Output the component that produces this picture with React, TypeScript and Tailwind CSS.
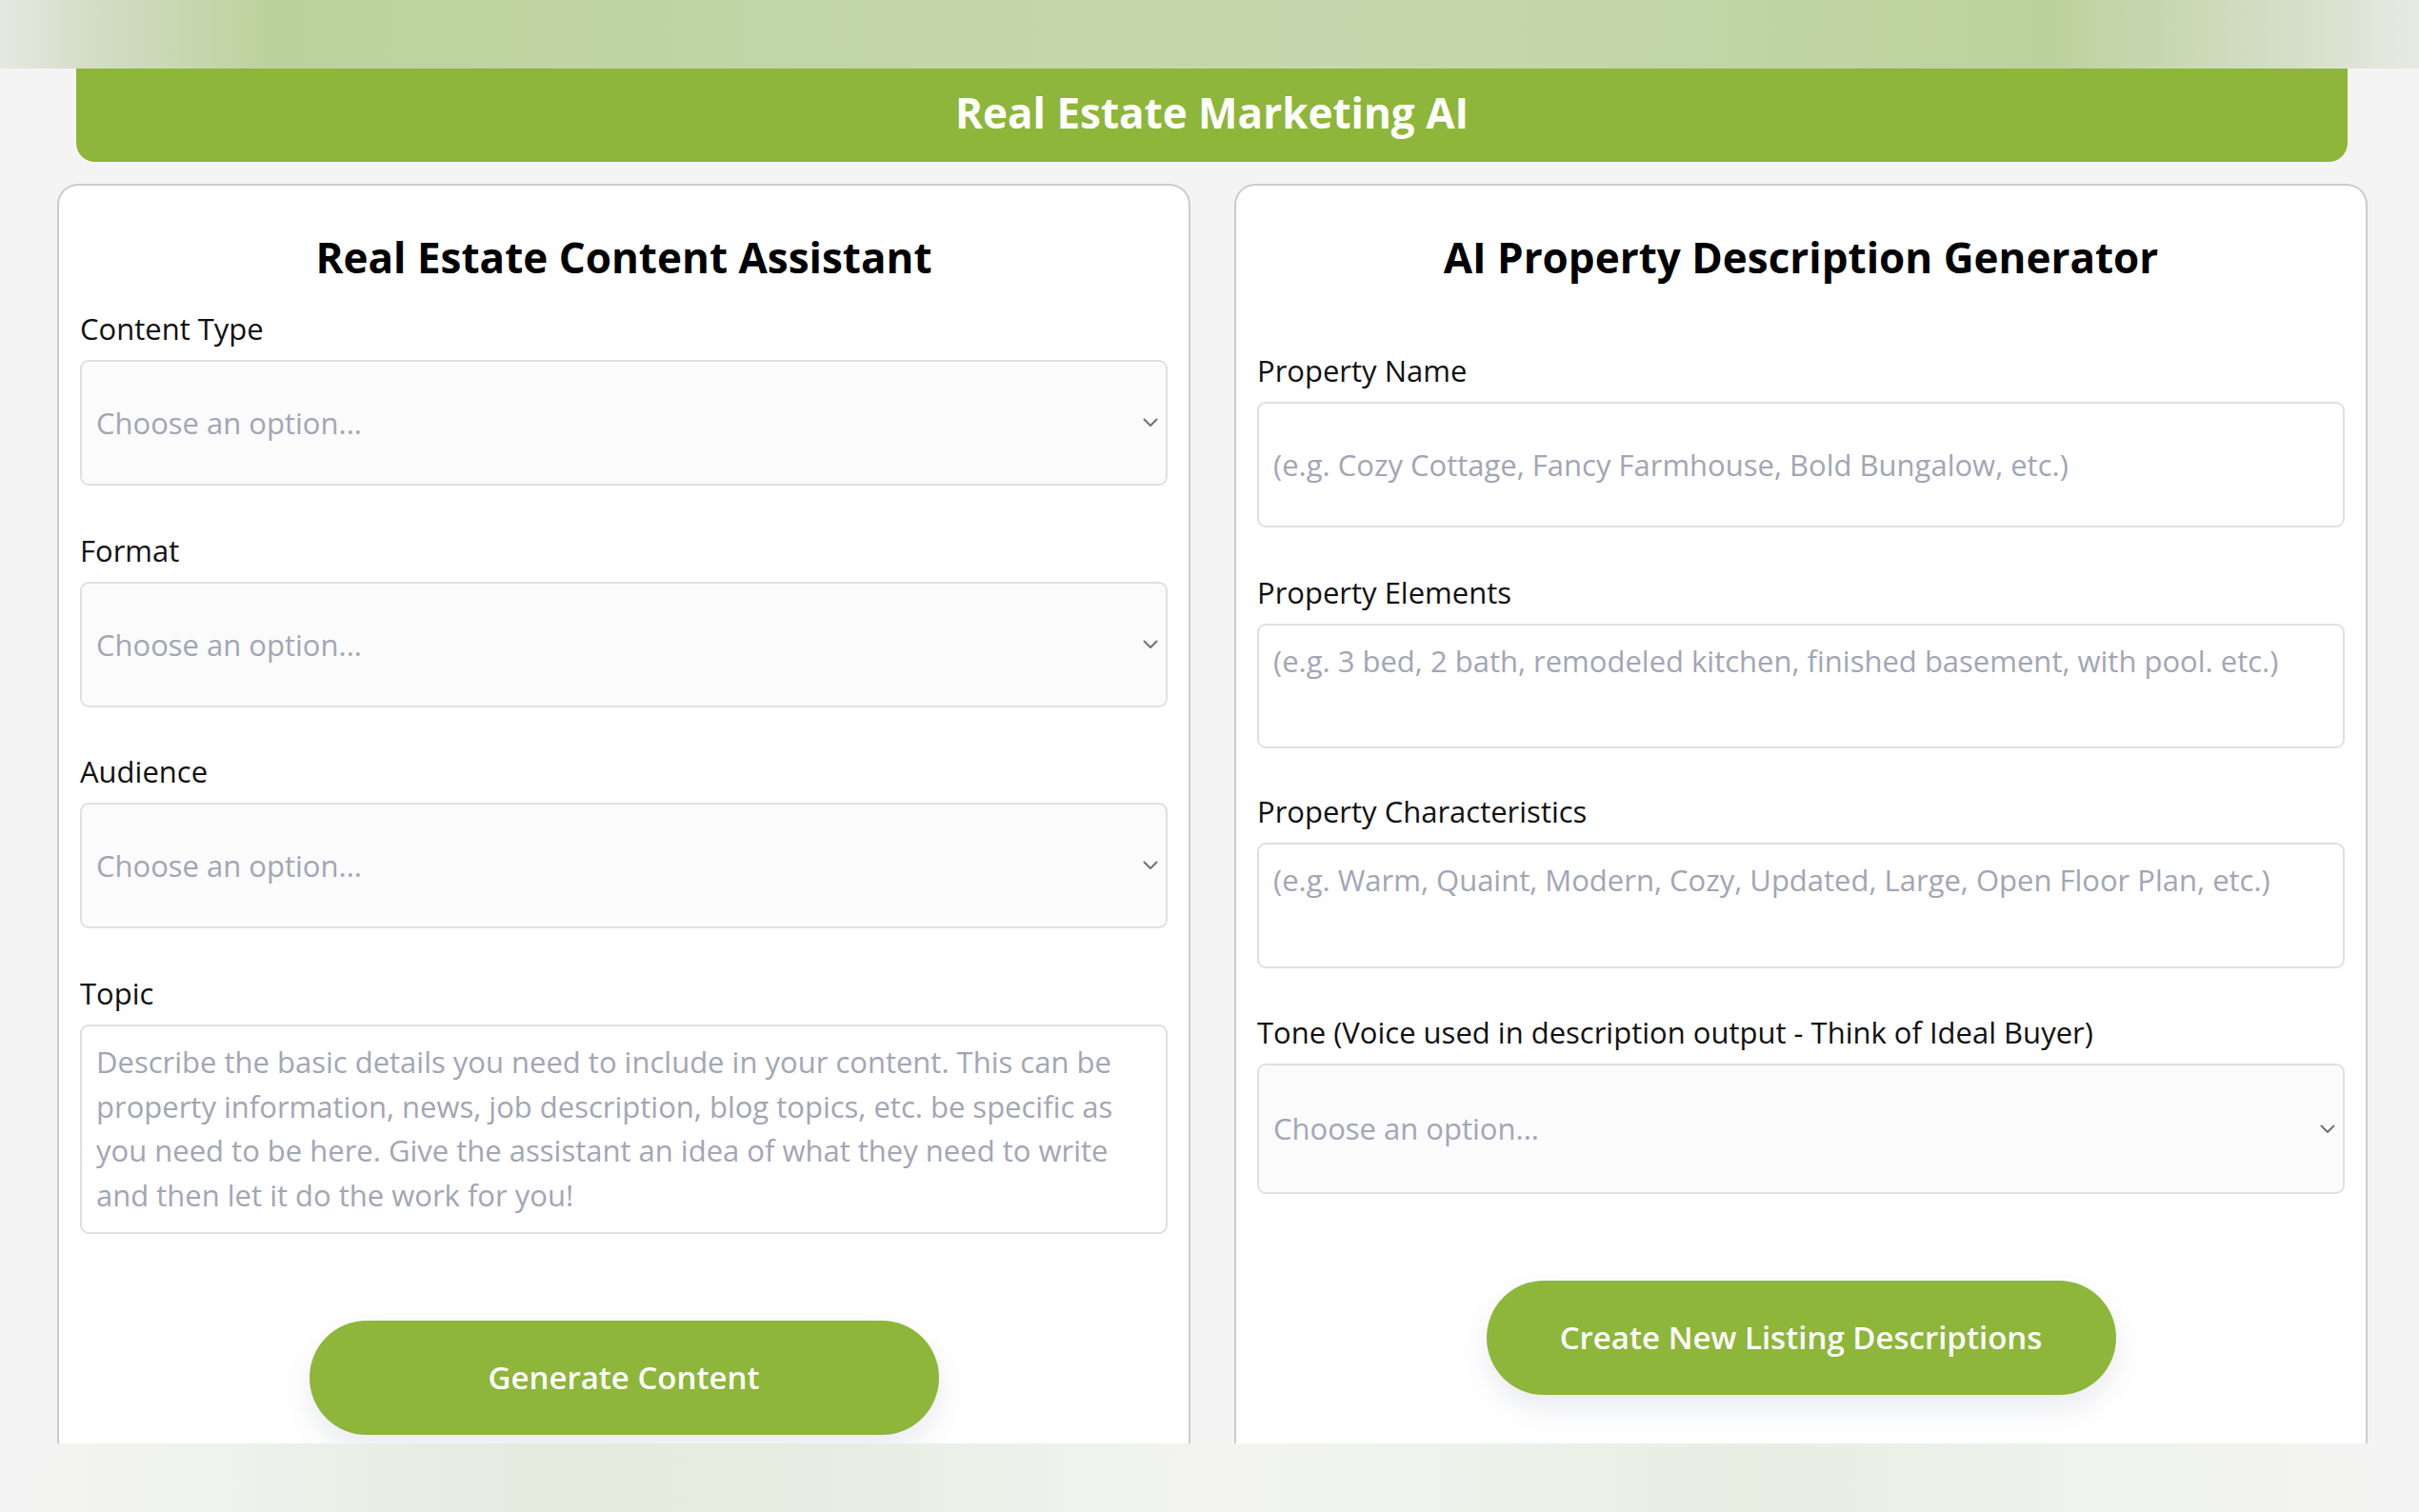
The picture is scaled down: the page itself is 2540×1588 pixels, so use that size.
const font = "font-['Open_Sans',_'Liberation_Sans',_sans-serif]"

function Label({ children }: { children: string }) {
  return <div className="mb-[10px] text-[31px] leading-[46px] text-[#111]">{children}</div>
}

function Chevron() {
  return (
    <svg width="16" height="10" viewBox="0 0 16 10" fill="none" stroke="#707076" strokeWidth="2" strokeLinecap="round" strokeLinejoin="round">
      <path d="M1.5 1.5l6.5 6.5 6.5-6.5" />
    </svg>
  )
}

function SelectBox({ height = 'h-[132px]' }: { height?: string }) {
  return (
    <div className={`flex items-center justify-between rounded-[9px] border-2 border-[#dfe0e6] bg-[#fbfbfc] pl-[15px] pr-[8px] ${height}`}>
      <span className="text-[31px] text-[#a2a6b5]">Choose an option...</span>
      <Chevron />
    </div>
  )
}

function TextBox({ text, height, center }: { text: string; height: string; center?: boolean }) {
  return (
    <div
      className={`rounded-[9px] border-2 border-[#dfe0e6] bg-white px-[15px] text-[31px] leading-[46.5px] text-[#a2a6b5] ${height} ${
        center ? 'flex items-center' : 'pt-[14px]'
      }`}
    >
      {text}
    </div>
  )
}

function Card({ title, children }: { title: string; children: React.ReactNode }) {
  return (
    <div className="flex flex-1 flex-col rounded-t-[22px] border-2 border-b-0 border-[#cbcbcb] bg-white px-[22px] pt-[44px] pb-[60px]">
      <h2 className="text-center text-[44px] leading-[62px] font-bold text-black">{title}</h2>
      {children}
    </div>
  )
}

function GreenButton({ children }: { children: string }) {
  return (
    <button className="mx-auto flex h-[120px] w-[661px] items-center justify-center rounded-full bg-[#8db63a] text-[33px] font-semibold text-white shadow-[0_14px_30px_rgba(80,90,130,0.12)]">
      {children}
    </button>
  )
}

export default function App() {
  return (
    <div className={`flex h-[1588px] flex-col overflow-hidden bg-[#f4f4f4] ${font}`}>
      {/* top band */}
      <div className="h-[72px] shrink-0 bg-[linear-gradient(to_right,#e6e9e1_0%,#d2ddc4_4%,#bcd29d_11%,#c2d6a8_40%,#c5d8ad_55%,#bcd29d_85%,#d5dfc9_95%,#e7eae3_100%)]" />

      <div className="flex min-h-0 flex-1 flex-col overflow-hidden">
        <div className="ml-[80px] mr-[75px] flex h-[98px] shrink-0 items-center justify-center rounded-b-[20px] bg-[#8db63a] pb-[6px]">
          <h1 className="text-[44px] font-bold text-white">Real Estate Marketing AI</h1>
        </div>

        <div className="mt-[23px] flex gap-[46px] pl-[60px] pr-[54px]">
          <Card title="Real Estate Content Assistant">
            <div className="mt-[21px]">
              <Label>Content Type</Label>
              <SelectBox />
            </div>
            <div className="mt-[45px]">
              <Label>Format</Label>
              <SelectBox />
            </div>
            <div className="mt-[44px]">
              <Label>Audience</Label>
              <SelectBox />
            </div>
            <div className="mt-[45px]">
              <Label>Topic</Label>
              <TextBox
                height="h-[220px]"
                text="Describe the basic details you need to include in your content. This can be property information, news, job description, blog topics, etc. be specific as you need to be here. Give the assistant an idea of what they need to write and then let it do the work for you!"
              />
            </div>
            <div className="mt-[91px]">
              <GreenButton>Generate Content</GreenButton>
            </div>
          </Card>

          <Card title="AI Property Description Generator">
            <div className="mt-[65px]">
              <Label>Property Name</Label>
              <TextBox center height="h-[132px]" text="(e.g. Cozy Cottage, Fancy Farmhouse, Bold Bungalow, etc.)" />
            </div>
            <div className="mt-[45px]">
              <Label>Property Elements</Label>
              <TextBox height="h-[131px]" text="(e.g. 3 bed, 2 bath, remodeled kitchen, finished basement, with pool. etc.)" />
            </div>
            <div className="mt-[43px]">
              <Label>Property Characteristics</Label>
              <TextBox height="h-[132px]" text="(e.g. Warm, Quaint, Modern, Cozy, Updated, Large, Open Floor Plan, etc.)" />
            </div>
            <div className="mt-[44px]">
              <Label>Tone (Voice used in description output - Think of Ideal Buyer)</Label>
              <SelectBox height="h-[137px]" />
            </div>
            <div className="mt-[91px]">
              <GreenButton>Create New Listing Descriptions</GreenButton>
            </div>
          </Card>
        </div>
      </div>

      {/* bottom band */}
      <div className="h-[72px] shrink-0 bg-[linear-gradient(to_right,#f4f4f4_0%,#f0f2ee_8%,#e5ebdf_22%,#e6ece0_32%,#f3f4f2_50%,#eef1ea_62%,#e8eee2_72%,#f0f2ee_88%,#f4f4f4_100%)]" />
    </div>
  )
}
